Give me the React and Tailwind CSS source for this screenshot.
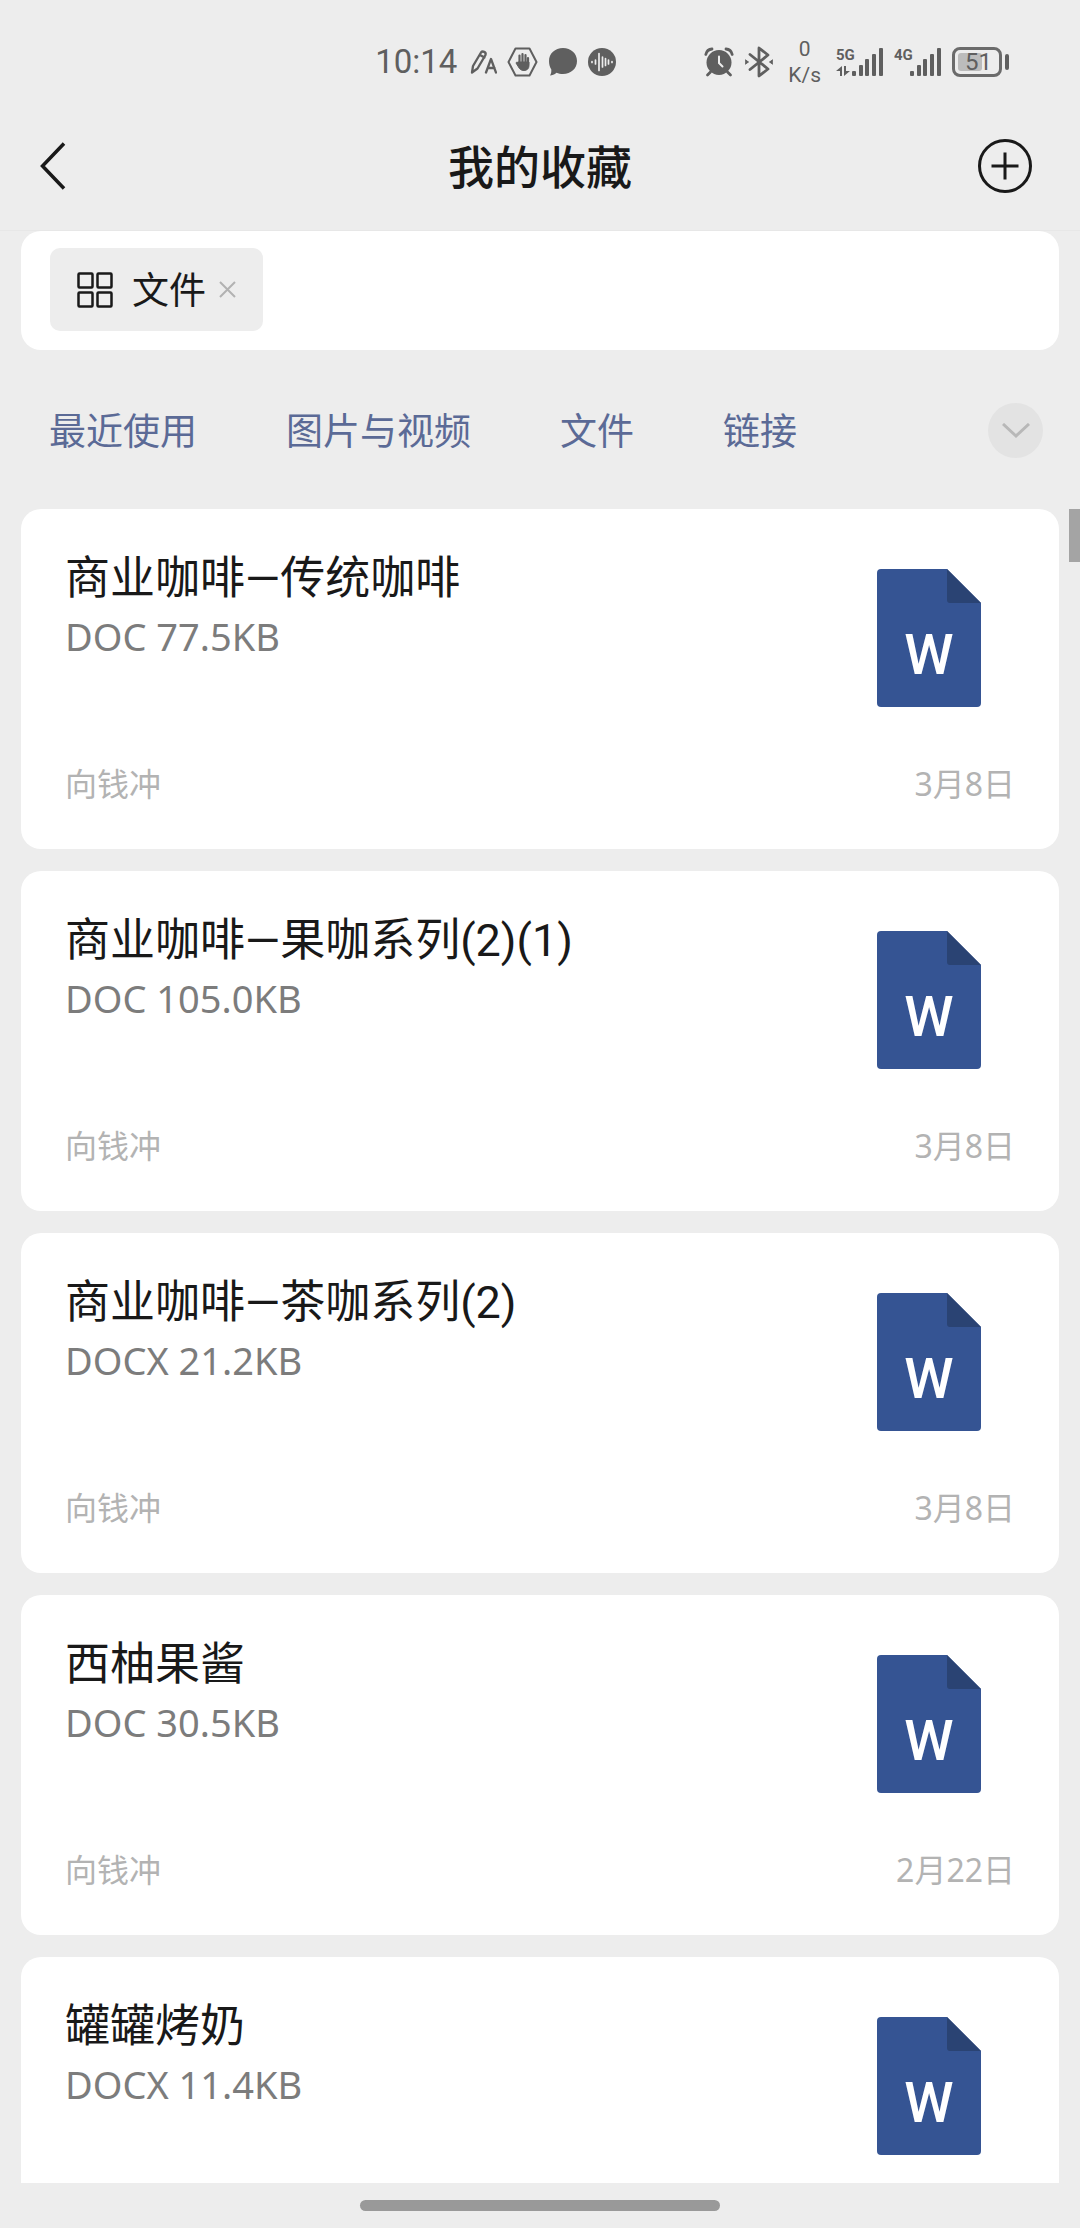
import { useState } from 'react'

const FILES = [
  { id: 1, title: '商业咖啡—传统咖啡', type: 'DOC', size: '77.5KB', owner: '向钱冲', date: '3月8日' },
  { id: 2, title: '商业咖啡—果咖系列(2)(1)', type: 'DOC', size: '105.0KB', owner: '向钱冲', date: '3月8日' },
  { id: 3, title: '商业咖啡—茶咖系列(2)', type: 'DOCX', size: '21.2KB', owner: '向钱冲', date: '3月8日' },
  { id: 4, title: '西柚果酱', type: 'DOC', size: '30.5KB', owner: '向钱冲', date: '2月22日' },
  { id: 5, title: '罐罐烤奶', type: 'DOCX', size: '11.4KB' },
]

const TABS = ['最近使用', '图片与视频', '文件', '链接']

function Signal({ label, arrows }) {
  return (
    <svg width="47" height="30" viewBox="0 0 47 30" fill="currentColor">
      <text x="0" y="13" fontSize="15" fontWeight="700" fontFamily="Roboto, sans-serif">{label}</text>
      {arrows && <path d="M6 19v10H4v-5H0zM8 29V19h2v5h4z" />}
      <rect x="16" y="24" width="4" height="5" rx="1" />
      <rect x="23" y="18" width="4" height="11" rx="1" />
      <rect x="29" y="12" width="4" height="17" rx="1" />
      <rect x="36" y="7" width="4" height="22" rx="1" />
      <rect x="43" y="1" width="4" height="28" rx="1" />
    </svg>
  )
}

function StatusBar() {
  return (
    <div className="flex h-[124px] items-center justify-end gap-[88px] pr-[71px] text-[#5f5f5f]">
      <div className="flex items-center gap-[10px]">
        <span className="mr-[3px] font-['Roboto',sans-serif] text-[33px] leading-[40px]">10:14</span>
        {/* pencil + A */}
        <svg width="27" height="26" viewBox="0 0 27 26" fill="none" stroke="currentColor" strokeWidth="2.300" strokeLinejoin="round" strokeLinecap="round">
          <path d="M2 23.500l1-6.500L11 3.500c1.500-2 5.500-.5 4.500 2.500L7.500 19.500zM10 6l4.500 2.500" />
          <path d="M16 23.500l5-13.500 5 13.500M18 19h6.500" />
        </svg>
        {/* hand in hexagon */}
        <svg width="31" height="30" viewBox="0 0 31 30" fill="none" stroke="currentColor" strokeLinejoin="round" strokeLinecap="round">
          <path d="M8.500 1.500h14L29.500 15l-7 13.500h-14L1.500 15z" strokeWidth="2" />
          <path d="M12.500 8.500v8M15.500 7v9M18.500 8v8M21 11v6" strokeWidth="2.200" />
          <path d="M11 15h11v3.500c0 3-2 5-5 5s-4.500-1.500-5.500-3.500l-2.500-4c0-1 1.500-1 2 0z" fill="currentColor" strokeWidth="1" />
        </svg>
        <svg width="30" height="30" viewBox="0 0 30 30" fill="currentColor">
          <path d="M15 1c8 0 14 5.500 14 13s-6 13-14 13c-2.500 0-4.500-.4-6.500-1.300C6.500 27.500 4 28.500 2 28.500c1-1.500 1.500-3.500 1.300-6C1.700 20 1 17 1 14 1 6.500 7 1 15 1z" />
        </svg>
        <svg width="28" height="28" viewBox="0 0 28 28">
          <circle cx="14" cy="14" r="14" fill="currentColor" />
          <path d="M4 13.500v1M7.500 12v4M11 5.500v17M14.500 9v10M17.500 10.500v7M20.500 12v4M24 13.500v1" stroke="#ededed" strokeWidth="1.700" strokeLinecap="round" />
        </svg>
      </div>

      <div className="flex items-center gap-[11px]">
        {/* alarm clock */}
        <svg width="30" height="30" viewBox="0 0 30 30" fill="none" stroke="currentColor" strokeLinecap="round">
          <circle cx="15" cy="15.500" r="12.500" fill="currentColor" stroke="none" />
          <path d="M1.800 7.500C2.500 4.500 5 2.200 8 2M28.200 7.500C27.500 4.500 25 2.200 22 2M6.500 25l-3 3M23.500 25l3 3" strokeWidth="2.800" />
          <path d="M15 9.500v6.500l3.500 3.500" stroke="#ededed" strokeWidth="2" />
        </svg>
        <svg width="28" height="32" viewBox="0 0 28 32" fill="none" stroke="currentColor" strokeWidth="2.800" strokeLinejoin="round" strokeLinecap="round">
          <path d="M5 8.500l18 14.500-9 7V2l9 7L5 23.500" />
          <path d="M.5 14l3 2-3 2zM27.500 14l-3 2 3 2z" fill="currentColor" strokeWidth="1" />
        </svg>
        <div className="px-1 text-center font-['Roboto',sans-serif] text-[21px] leading-[26px]">
          <div>0</div>
          <div>K/s</div>
        </div>
        <Signal label="5G" arrows />
        <Signal label="4G" />
        <div className="flex items-center gap-[3px]">
          <div className="flex h-[30px] w-[50px] items-center rounded-lg border-[3px] border-[#6b6b6b] p-[3px]">
            <div className="flex h-full w-[24px] items-center rounded-[3px] bg-[#bcbcbc] pl-[7px]">
              <span className="font-['Roboto',sans-serif] text-[24px] leading-none">51</span>
            </div>
          </div>
          <div className="h-[16px] w-[4px] rounded-full bg-current" />
        </div>
      </div>
    </div>
  )
}

function DocIcon() {
  return (
    <svg width="104" height="138" viewBox="0 0 104 138" className="mr-[34px] shrink-0">
      <path d="M4 0h66l34 34v100a4 4 0 0 1-4 4H4a4 4 0 0 1-4-4V4a4 4 0 0 1 4-4z" fill="#355493" />
      <path d="M70 0l34 34H73a3 3 0 0 1-3-3z" fill="#2a4373" />
      <text x="52" y="105" textAnchor="middle" fontSize="56" fontWeight="500" fontFamily="Roboto, sans-serif" fill="#fff">W</text>
    </svg>
  )
}

function FileCard({ file }) {
  return (
    <li className="min-h-[340px] shrink-0 rounded-[20px] bg-white px-11 pt-[47px] pb-[45px]">
      <div className="flex items-end justify-between">
        <div className="h-[151px]">
          <h2 className="font-['Roboto','Noto_Sans_CJK_SC',sans-serif] text-[45px] leading-[46px]">{file.title}</h2>
          <p className="mt-3 text-[38px] leading-[44px] text-[#7c7c7c]">{file.type} {file.size}</p>
        </div>
        <DocIcon />
      </div>
      {file.owner && (
        <div className="mt-[57px] flex justify-between text-[32px] leading-[40px] text-[#b3b3b3]">
          <span>{file.owner}</span>
          <span>{file.date}</span>
        </div>
      )}
    </li>
  )
}

export default function App() {
  const [showFilter, setShowFilter] = useState(true)

  return (
    <main className="flex h-screen flex-col bg-[#ededed] font-['Noto_Sans','Noto_Sans_CJK_SC',sans-serif] text-[#191919]">
      <header className="border-b border-[#e7e7e7] pb-[22px]">
        <StatusBar />
        <div className="flex h-[84px] items-center justify-between pr-12 pl-[39px]">
          <button aria-label="返回" className="w-[63px]">
            <svg width="27" height="48" viewBox="0 0 27 48" fill="none" stroke="currentColor" strokeWidth="3.500">
              <path d="M25 1.500L3.500 24 25 46.500" />
            </svg>
          </button>
          <h1 className="text-[46px] leading-[60px] font-medium">我的收藏</h1>
          <button aria-label="添加">
            <svg width="54" height="54" viewBox="0 0 54 54" fill="none" stroke="currentColor" strokeWidth="3">
              <circle cx="27" cy="27" r="25.500" />
              <path d="M27 13.500v27M13.500 27h27" />
            </svg>
          </button>
        </div>
      </header>

      <div className="mx-[21px] flex min-h-[119px] rounded-[20px] bg-white px-[29px] pt-[17px] pb-[19px]">
        {showFilter && (
          <div className="flex h-[83px] items-center rounded-[10px] bg-[#ededed] px-[27px]">
            <svg width="36" height="36" viewBox="0 0 36 36" fill="none" stroke="currentColor" strokeWidth="2.500">
              <rect x="1.500" y="1.500" width="14" height="14" rx="1" />
              <rect x="20.500" y="1.500" width="14" height="14" rx="1" />
              <rect x="1.500" y="20.500" width="14" height="14" rx="1" />
              <rect x="20.500" y="20.500" width="14" height="14" rx="1" />
            </svg>
            <span className="ml-[19px] text-[37px] leading-[48px]">文件</span>
            <button aria-label="清除" onClick={() => setShowFilter(false)} className="ml-[13px]">
              <svg width="17" height="17" viewBox="0 0 17 17" fill="none" stroke="#b2b2b2" strokeWidth="2">
                <path d="M1 1l15 15M16 1L1 16" />
              </svg>
            </button>
          </div>
        )}
      </div>

      <nav className="flex items-center gap-[89px] pt-[53px] pr-[37px] pb-[51px] pl-[49px] text-[37px] leading-[48px] text-[#5b6a96]">
        {TABS.map(tab => (
          <button key={tab}>{tab}</button>
        ))}
        <button aria-label="展开" className="ml-auto flex size-[55px] items-center justify-center rounded-full bg-[#e3e3e3]">
          <svg width="28" height="16" viewBox="0 0 28 16" fill="none" stroke="#b8b8b8" strokeWidth="3">
            <path d="M1 1l13 12L27 1" />
          </svg>
        </button>
      </nav>

      <div className="relative min-h-0 flex-1 overflow-hidden">
        <ul className="mx-[21px] flex flex-col gap-[22px]">
          {FILES.map(file => (
            <FileCard key={file.id} file={file} />
          ))}
        </ul>
        <div className="absolute top-0 right-0 h-[53px] w-[11px] bg-[#a4a4a4]" />
      </div>

      <footer className="flex justify-center pt-[17px] pb-[17px]">
        <div className="h-[11px] w-1/3 rounded-full bg-[#999]" />
      </footer>
    </main>
  )
}
